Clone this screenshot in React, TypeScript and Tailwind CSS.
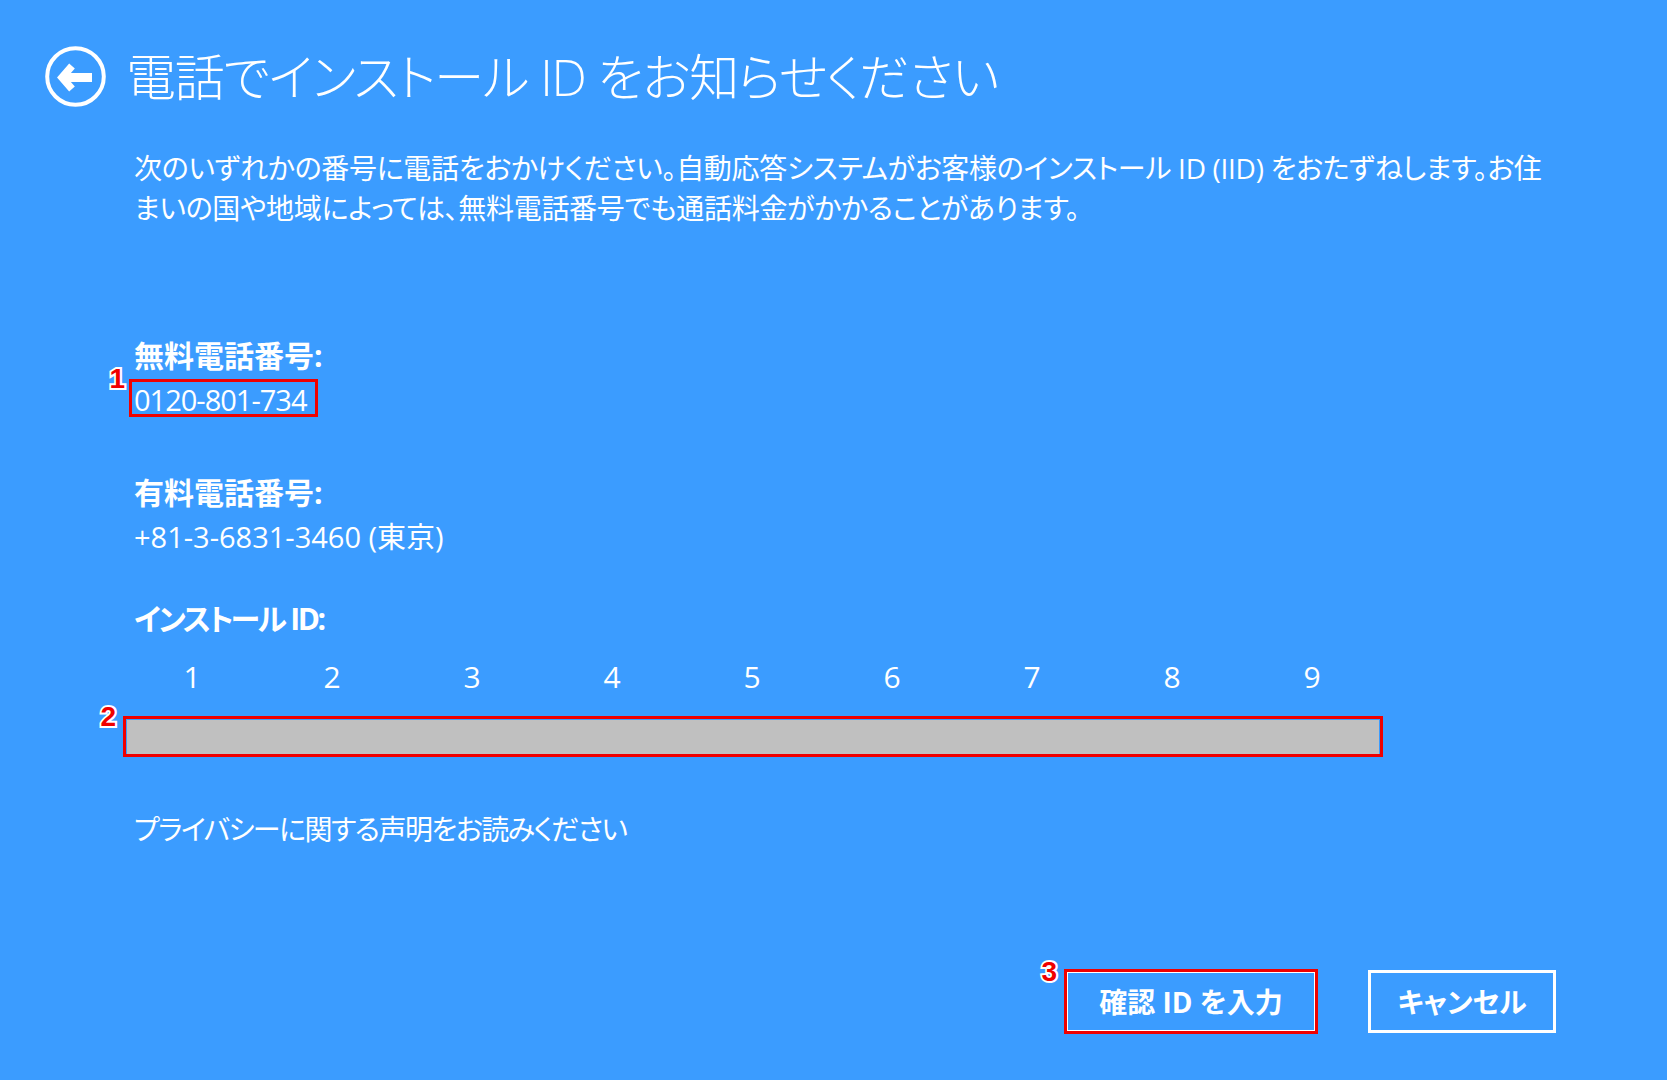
import React from "react";

function Badge({ n, className }: { n: string; className: string }) {
  return (
    <span
      className={
        "absolute font-['Liberation_Sans',Arial,sans-serif] font-bold text-[28px] leading-none text-[#f00000] [-webkit-text-stroke:4px_white] [paint-order:stroke_fill] " +
        className
      }
    >
      {n}
    </span>
  );
}

export default function App() {
  const digits = ["1", "2", "3", "4", "5", "6", "7", "8", "9"];
  return (
    <div className="w-[1667px] h-[1080px] bg-[#3b9cff] text-white font-['Open_Sans','Noto_Sans_CJK_JP',sans-serif] [font-feature-settings:'palt'] flex flex-col overflow-hidden">
      <header className="mt-[46px] ml-[45px] flex items-center gap-[20px] h-[61px]">
        <svg width="61" height="61" viewBox="0 0 61 61" fill="none">
          <circle cx="30.5" cy="30.5" r="28.3" stroke="white" strokeWidth="4" />
          <path d="M27 20 L17 31.5 L27 43" stroke="white" strokeWidth="7.5" strokeLinejoin="miter" strokeMiterlimit="10" />
          <path d="M19 31.5 H47" stroke="white" strokeWidth="9" />
        </svg>
        <h1 className="text-[50px] font-light leading-none tracking-[-1.2px] whitespace-nowrap">
          電話でインストール ID をお知らせください
        </h1>
      </header>

      <main className="pl-[134px] flex flex-col">
        <p className="mt-[41px] text-[28px] leading-[40px] whitespace-nowrap tracking-[-0.3px]">
          次のいずれかの番号に電話をおかけください。自動応答システムがお客様のインストール ID (IID) をおたずねします。お住
          <br />
          まいの国や地域によっては、無料電話番号でも通話料金がかかることがあります。
        </p>

        <div className="mt-[106px] text-[30px] leading-[44px] font-bold">無料電話番号:</div>
        <div className="text-[29px] leading-[44px] tracking-[-1px]">
          <span className="relative inline-block">
            0120-801-734
            <span className="absolute left-[-5px] right-[-12px] top-[1px] bottom-[5px] border-[3px] border-[#f00000]" />
            <Badge n="1" className="right-[calc(100%+10px)] top-[-13px]" />
          </span>
        </div>

        <div className="mt-[49px] text-[30px] leading-[44px] font-bold">有料電話番号:</div>
        <div className="text-[29px] leading-[44px]">+81-3-6831-3460 (東京)</div>

        <div className="mt-[38px] text-[30px] leading-[44px] font-bold tracking-[-2.5px]">
          インストール<span className="ml-[6px]">ID:</span>
        </div>

        <div className="mt-[16px] ml-[-12px] w-[1260px] grid grid-cols-9 text-[30px] leading-[40px]">
          {digits.map((d) => (
            <div key={d} className="text-center">
              {d}
            </div>
          ))}
        </div>

        <div className="relative mt-[23px] ml-[-7px] w-[1252px] h-[34px] bg-[#c0c0c0]">
          <span className="absolute left-[-4px] right-[-4px] top-[-4px] bottom-[-3px] border-[3px] border-[#f00000]" />
          <Badge n="2" className="right-[calc(100%+11px)] top-[-17px]" />
        </div>

        <div className="mt-[55px] text-[28px] leading-[40px] tracking-[-1.5px]">プライバシーに関する声明をお読みください</div>
      </main>

      <div className="mt-[121px] flex justify-end gap-[51px] pr-[111px]">
        <div className="relative">
          <button className="w-[252px] h-[63px] border-[3px] border-white flex items-center justify-center text-[28px] font-bold leading-none text-white">
            確認 ID を入力
          </button>
          <span className="absolute -inset-[1px] border-[3px] border-[#f00000]" />
          <Badge n="3" className="right-[calc(100%+8px)] top-[-12px]" />
        </div>
        <button className="w-[188px] h-[63px] border-[3px] border-white flex items-center justify-center text-[28px] font-bold leading-none text-white">
          キャンセル
        </button>
      </div>
    </div>
  );
}
